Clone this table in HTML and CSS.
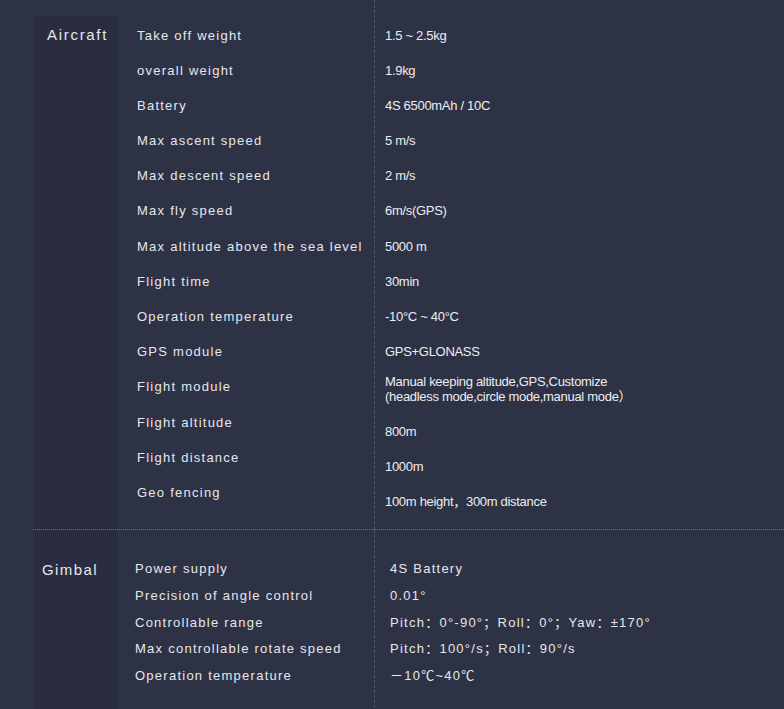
FILE: index.html
```html
<!DOCTYPE html>
<html lang="en">
<head>
  <meta charset="UTF-8">
  <title>Specifications</title>
  <link rel="stylesheet" href="styles.css">
</head>
<body>
  <div class="sheet">

    <div class="section section-aircraft">
      <div class="cat cat-aircraft">Aircraft</div>
      <div class="labels">
        <div class="row">Take off weight</div>
        <div class="row">overall weight</div>
        <div class="row">Battery</div>
        <div class="row">Max ascent speed</div>
        <div class="row">Max descent speed</div>
        <div class="row">Max fly speed</div>
        <div class="row">Max altitude above the sea level</div>
        <div class="row">Flight time</div>
        <div class="row">Operation temperature</div>
        <div class="row">GPS module</div>
        <div class="row">Flight module</div>
        <div class="row">Flight altitude</div>
        <div class="row">Flight distance</div>
        <div class="row">Geo fencing</div>
      </div>
      <div class="values">
        <div class="row">1.5 ~ 2.5kg</div>
        <div class="row">1.9kg</div>
        <div class="row">4S 6500mAh / 10C</div>
        <div class="row">5 m/s</div>
        <div class="row">2 m/s</div>
        <div class="row">6m/s(GPS)</div>
        <div class="row">5000 m</div>
        <div class="row">30min</div>
        <div class="row">-10°C ~ 40°C</div>
        <div class="row">GPS+GLONASS</div>
        <div class="row row-multi">Manual keeping altitude,GPS,Customize<br>(headless mode,circle mode,manual mode）</div>
        <div class="row">800m</div>
        <div class="row">1000m</div>
        <div class="row">100m height，300m distance</div>
      </div>
    </div>

    <div class="section section-gimbal">
      <div class="cat cat-gimbal">Gimbal</div>
      <div class="labels">
        <div class="row">Power supply</div>
        <div class="row">Precision of angle control</div>
        <div class="row">Controllable range</div>
        <div class="row">Max controllable rotate speed</div>
        <div class="row">Operation temperature</div>
      </div>
      <div class="values">
        <div class="row">4S Battery</div>
        <div class="row">0.01°</div>
        <div class="row">Pitch：0°-90°；Roll：0°；Yaw：±170°</div>
        <div class="row">Pitch：100°/s；Roll：90°/s</div>
        <div class="row">－10℃~40℃</div>
      </div>
    </div>

  </div>
</body>
</html>
```

FILE: styles.css
```css
html {
  background-color: #2e3245;
}

body {
  margin: 0;
  font-family: "Liberation Sans", Arial, "Noto Sans CJK SC", sans-serif;
  color: #e6e7eb;
}

.sheet {
  padding-left: 33px;
}

.section {
  display: flex;
}

.cat {
  width: 84px;
  flex-shrink: 0;
  box-sizing: border-box;
  background: #2a2d3f;
  font-size: 15px;
  line-height: 18px;
  letter-spacing: 1.7px;
}

.cat-aircraft {
  margin-top: 16px;
  padding: 10px 0 0 14px;
}

.cat-gimbal {
  padding: 31px 0 0 9px;
  letter-spacing: 1.4px;
}

.labels {
  width: 257px;
  flex-shrink: 0;
  box-sizing: border-box;
  display: flex;
  flex-direction: column;
  font-size: 13px;
  line-height: 15px;
  letter-spacing: 1.25px;
}

.values {
  flex: 1;
  display: flex;
  flex-direction: column;
  border-left: 1px dashed #515669;
  font-size: 13px;
  line-height: 15px;
}

/* aircraft */
.section-aircraft .labels,
.section-aircraft .values {
  gap: 20.2px;
  padding-top: 27.5px;
  padding-bottom: 29px;
}

.section-aircraft .labels {
  padding-left: 20px;
}

.section-aircraft .values {
  padding-left: 10px;
  padding-bottom: 19px;
  letter-spacing: -0.3px;
  color: #eceef2;
}

.row-multi {
  margin-top: -5.5px;
}

/* gimbal */
.section-gimbal {
  border-top: 1px dotted #6b6f82;
}

.section-gimbal .labels,
.section-gimbal .values {
  gap: 11.8px;
  padding-top: 31px;
  padding-bottom: 40px;
}

.section-gimbal .labels {
  padding-left: 18px;
}

.section-gimbal .values {
  padding-left: 15px;
  letter-spacing: 1.25px;
}
```
